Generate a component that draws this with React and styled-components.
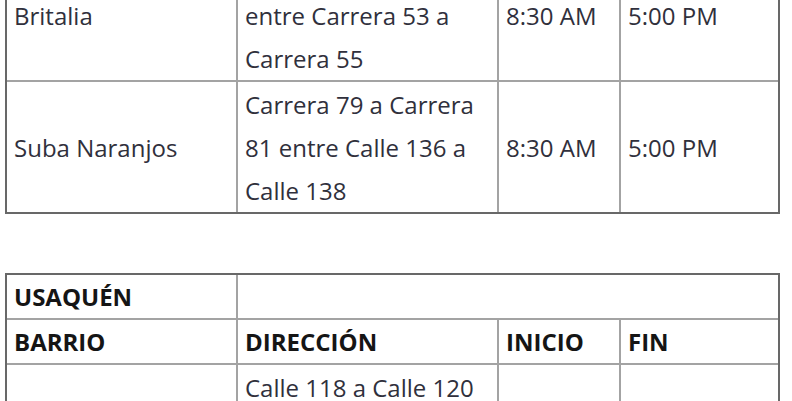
import React from 'react';
import styled, { createGlobalStyle } from 'styled-components';

const GlobalStyle = createGlobalStyle`
  html, body {
    margin: 0;
    padding: 0;
    background: #ffffff;
    overflow: hidden;
  }
`;

const Page = styled.div`
  margin-top: -52px;
  padding: 0 12px 0 5px;
  font-family: "Open Sans", "Noto Sans", sans-serif;
  font-size: 24px;
  color: #2f2f3a;
`;

// dark outer frame; the table inside hides its own edge borders
const Frame = styled.div`
  width: 771px;
  border: 2px solid #686868;
  margin-bottom: ${(p) => p.$gap || 0}px;
`;

const Table = styled.table`
  border-collapse: collapse;
  table-layout: fixed;
  width: 100%;
  border-style: hidden;
`;

const Cell = styled.td`
  border: 2px solid #a3a3a3;
  padding: ${(p) => (p.$bold ? '0 7px' : '1px 7px 0')};
  line-height: 43px;
  vertical-align: middle;
  text-align: left;
  font-weight: ${(p) => (p.$bold ? 700 : 400)};
  color: ${(p) => (p.$bold ? '#151515' : '#30303c')};
  white-space: nowrap;
`;

const cols = [230, 261, 122, 158];

const Cols = () => (
  <colgroup>
    {cols.map((w, i) => (
      <col key={i} style={{ width: w }} />
    ))}
  </colgroup>
);

const suba = [
  {
    barrio: 'Britalia',
    dir: ['Calle 163 a Calle 165', 'entre Carrera 53 a', 'Carrera 55'],
    inicio: '8:30 AM',
    fin: '5:00 PM',
  },
  {
    barrio: 'Suba Naranjos',
    dir: ['Carrera 79 a Carrera', '81 entre Calle 136 a', 'Calle 138'],
    inicio: '8:30 AM',
    fin: '5:00 PM',
  },
];

const usaquen = [
  {
    barrio: 'Santa Bárbara',
    dir: ['Calle 118 a Calle 120', 'entre Carrera 7 a', 'Carrera 9'],
    inicio: '8:30 AM',
    fin: '5:00 PM',
  },
];

const Lines = ({ lines }) =>
  lines.map((l, i) => (
    <React.Fragment key={i}>
      {l}
      {i < lines.length - 1 && <br />}
    </React.Fragment>
  ));

const Rows = ({ data }) =>
  data.map((r) => (
    <tr key={r.barrio}>
      <Cell>{r.barrio}</Cell>
      <Cell>
        <Lines lines={r.dir} />
      </Cell>
      <Cell>{r.inicio}</Cell>
      <Cell>{r.fin}</Cell>
    </tr>
  ));

const App = () => (
  <>
    <GlobalStyle />
    <Page>
      <Frame $gap={59}>
        <Table>
          <Cols />
          <tbody>
            <Rows data={suba} />
          </tbody>
        </Table>
      </Frame>
      <Frame>
        <Table>
          <Cols />
          <tbody>
            <tr>
              <Cell $bold>USAQUÉN</Cell>
              <Cell colSpan={3}></Cell>
            </tr>
            <tr>
              <Cell $bold>BARRIO</Cell>
              <Cell $bold>DIRECCIÓN</Cell>
              <Cell $bold>INICIO</Cell>
              <Cell $bold>FIN</Cell>
            </tr>
            <Rows data={usaquen} />
          </tbody>
        </Table>
      </Frame>
    </Page>
  </>
);

export default App;
